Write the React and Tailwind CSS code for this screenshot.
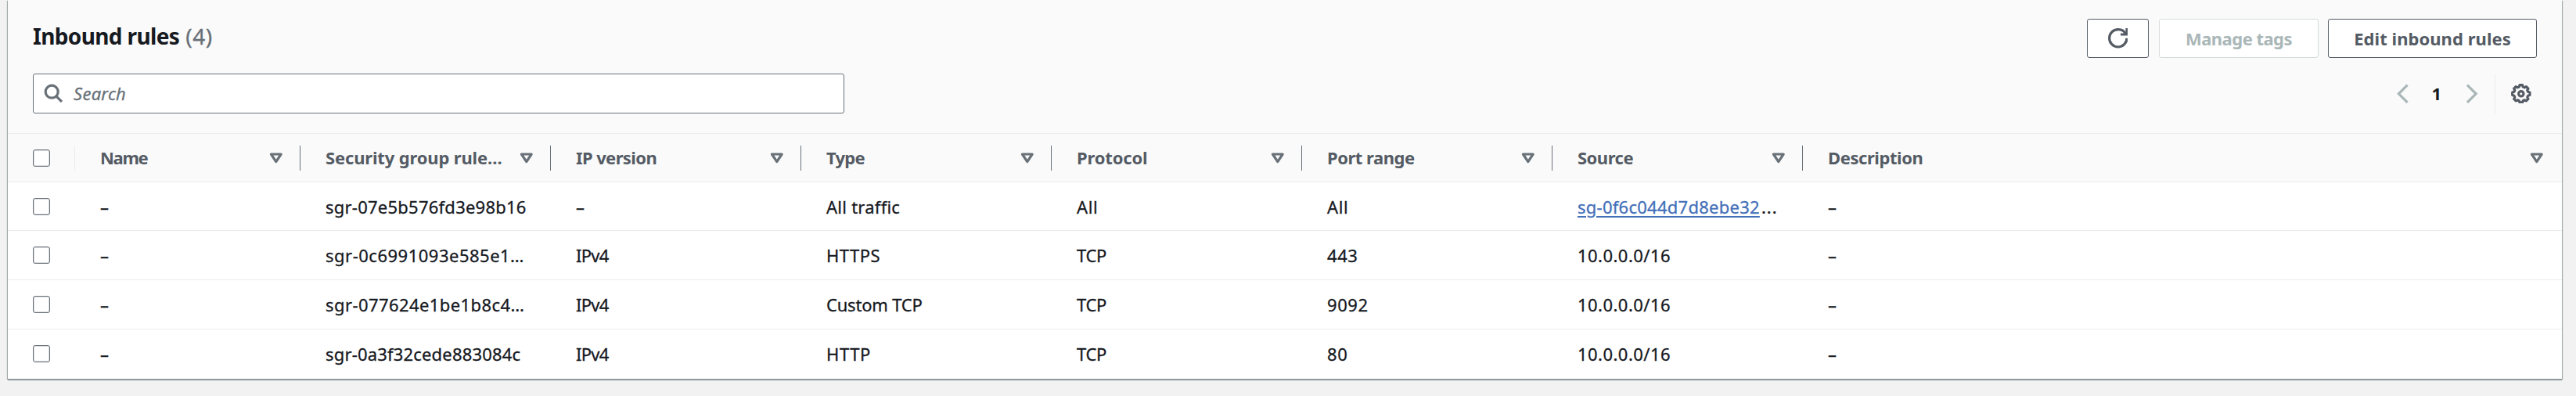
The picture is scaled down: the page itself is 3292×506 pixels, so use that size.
const rows = [
  { id: "sgr-07e5b576fd3e98b16", idCls: "tracking-[0.24px]", ip: "–", type: "All traffic", typeCls: "tracking-[0.25px]", protocol: "All", port: "All", source: "sg-0f6c044d7d8ebe32", link: true, h: "h-[62px]" },
  { id: "sgr-0c6991093e585e1…", idCls: "tracking-[0.5px]", ip: "IPv4", type: "HTTPS", typeCls: "tracking-[0.5px]", protocol: "TCP", port: "443", source: "10.0.0.0/16", h: "h-[63px]" },
  { id: "sgr-077624e1be1b8c4…", idCls: "tracking-[0.42px]", ip: "IPv4", type: "Custom TCP", typeCls: "tracking-[-0.2px]", protocol: "TCP", port: "9092", source: "10.0.0.0/16", h: "h-[63px]" },
  { id: "sgr-0a3f32cede883084c", idCls: "tracking-[0.18px]", ip: "IPv4", type: "HTTP", typeCls: "tracking-[0.6px]", protocol: "TCP", port: "80", source: "10.0.0.0/16", h: "h-[63px]" },
];

const columns = [
  { label: "Name", cls: "tracking-[-1.3px]" },
  { label: "Security group rule…", cls: "tracking-[-0.16px]" },
  { label: "IP version", cls: "tracking-[-0.6px]" },
  { label: "Type", cls: "tracking-[-0.74px]" },
  { label: "Protocol", cls: "tracking-[-0.17px]" },
  { label: "Port range", cls: "tracking-[-0.48px]" },
  { label: "Source", cls: "tracking-[-0.5px]" },
  { label: "Description", cls: "tracking-[-0.43px]" },
];

const GRID = "grid grid-cols-[86px_288px_repeat(6,320px)_1fr]";

const gearPath = (() => {
  const pts = [];
  for (let k = 0; k < 8; k++) {
    for (const [r, d] of [[5.75, -15.5], [7.05, -9], [7.05, 9], [5.75, 15.5]]) {
      const a = ((k * 45 + d - 90) * Math.PI) / 180;
      pts.push(`${(8 + r * Math.cos(a)).toFixed(2)} ${(8 + r * Math.sin(a)).toFixed(2)}`);
    }
  }
  return `M${pts.join("L")}Z`;
})();

function Icon({ className = "", children, join = "miter" }) {
  return (
    <svg viewBox="0 0 16 16" fill="none" stroke="currentColor" strokeWidth="2" strokeLinejoin={join} className={`size-[25.6px] shrink-0 ${className}`}>
      {children}
    </svg>
  );
}

function Checkbox() {
  return <span className="block size-[22px] rounded-[3px] border border-[#687078] bg-white shadow-[inset_0_0_0_1px_rgba(104,112,120,0.25)]" />;
}

function Cell({ className = "", children }) {
  return <div className={`flex items-center whitespace-nowrap pl-8 ${className}`}>{children}</div>;
}

export default function App() {
  return (
    <div className="h-[506px] w-[3292px] overflow-hidden bg-[#f2f2f2] pl-[10px] pr-[18px] font-['Noto_Sans','Open_Sans',sans-serif] text-[22px] leading-[30px] text-[#16191f]">
      <div className="h-[484px] bg-white shadow-[0_1px_0_#879596,0_2px_1px_rgba(0,28,36,0.3),1px_1px_1px_rgba(0,28,36,0.3),-1px_1px_1px_rgba(0,28,36,0.3)]">
        <div className="h-[170px] bg-[#fafafa] pl-8 pr-8 pt-6">
          <div className="flex h-[50px] items-start justify-between">
            <div className="mt-[3px] flex text-[28px] leading-[39px]">
              <h2 className="font-bold tracking-[-0.64px]">Inbound rules</h2>
              <span className="ml-2 tracking-[0.54px] text-[#687078] [-webkit-text-stroke:0.3px]">(4)</span>
            </div>
            <div className="flex font-bold text-[#545b64]">
              <button className="mr-[13px] flex h-[50px] w-[79px] items-center justify-center rounded-[3px] border border-[#545b64] bg-white">
                <Icon>
                  <path d="M10 5h5V0" />
                  <path d="M15 8a7 7 0 0 1-7 7 7 7 0 0 1-7-7 7 7 0 0 1 7-7 6.87 6.87 0 0 1 6.3 4" />
                </Icon>
              </button>
              <button className="mr-3 flex h-[50px] w-[204px] items-center justify-center rounded-[3px] border border-[#d5dbdb] bg-white pb-px tracking-[-0.53px] text-[#aab7b8]">Manage tags</button>
              <button className="flex h-[50px] w-[267px] items-center justify-center rounded-[3px] border border-[#545b64] bg-white pb-px tracking-[0.05px]">Edit inbound rules</button>
            </div>
          </div>
          <div className="mt-5 flex h-[51px] items-center justify-between">
            <div className="flex h-[51px] w-[1037px] items-center rounded-[3px] border border-[#687078] bg-white pl-[11.5px] text-[#687078]">
              <Icon className="-mt-[2px]">
                <circle cx="7" cy="7" r="5" />
                <path d="m15 15-4.5-4.5" />
              </Icon>
              <span className="-mt-px ml-[14px] italic tracking-[0.23px] [-webkit-text-stroke:0.3px]">Search</span>
            </div>
            <div className="flex items-center pr-[7px] text-[#aab7b8]">
              <Icon><path d="M11 1 4 8l7 7" /></Icon>
              <span className="w-[60px] pb-px pr-[2px] text-center font-bold text-[#16191f]">1</span>
              <Icon><path d="m5 1 7 7-7 7" /></Icon>
              <span className="ml-[18px] mr-5 h-[50px] w-px bg-[#eaeded]" />
              <Icon className="text-[#545b64]" join="round">
                <path d={gearPath} />
                <circle cx="8" cy="8" r="2" />
              </Icon>
            </div>
          </div>
        </div>

        <div className={`${GRID} h-[63px] border-y border-[#eaeded] bg-[#fafafa] font-bold text-[#545b64]`}>
          <div className="flex items-center justify-between pl-8">
            <Checkbox />
            <span className="h-8 w-px bg-[#eaeded]" />
          </div>
          {columns.map((c, i) => (
            <Cell key={c.label} className="justify-between">
              <span className={`pb-[2px] ${c.cls}`}>{c.label}</span>
              <span className="flex items-center">
                <Icon className={i === 7 ? "mr-[19px] text-[#687078]" : "mr-[17px] text-[#687078]"} join="round">
                  <path d="M4 5h8l-4 6-4-6z" />
                </Icon>
                {i < 7 && <span className="h-8 w-px bg-[#687078]" />}
              </span>
            </Cell>
          ))}
        </div>

        {rows.map((r, i) => (
          <div key={r.id} className={`${GRID} ${r.h} ${i < 3 ? "border-b border-[#eaeded]" : "pb-px"} [-webkit-text-stroke:0.3px]`}>
            <Cell><Checkbox /></Cell>
            <Cell>–</Cell>
            <Cell className={r.idCls}>{r.id}</Cell>
            <Cell className={r.ip === "–" ? "" : "tracking-[-0.7px]"}>{r.ip}</Cell>
            <Cell className={r.typeCls}>{r.type}</Cell>
            <Cell className={r.protocol === "TCP" ? "tracking-[-0.35px]" : "tracking-[0.6px]"}>{r.protocol}</Cell>
            <Cell className="tracking-[0.6px]">{r.port}</Cell>
            <Cell className={r.link ? "tracking-[0.26px]" : "tracking-[0.46px]"}>
              {r.link ? (
                <>
                  <a className="text-[#4470b9] underline decoration-2 underline-offset-[3px]">{r.source}</a>
                  <span className="ml-[2px] tracking-[1px]">...</span>
                </>
              ) : (
                r.source
              )}
            </Cell>
            <Cell>–</Cell>
          </div>
        ))}
      </div>
    </div>
  );
}
